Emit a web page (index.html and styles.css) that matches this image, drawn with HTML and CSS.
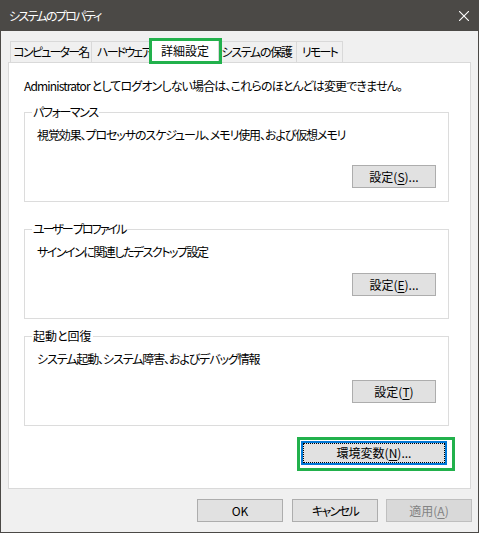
FILE: index.html
```html
<!DOCTYPE html>
<html lang="ja">
<head>
    <meta charset="UTF-8">
    <title>システムのプロパティ</title>
    <link rel="stylesheet" href="styles.css">
</head>
<body>
    <div class="window">
        <div class="titlebar">
            <span class="title">システムのプロパティ</span>
            <svg class="close" width="10" height="10" viewBox="0 0 10 10">
                <path d="M0 0L10 10M10 0L0 10" stroke="#fff" stroke-width="1.1" fill="none"/>
            </svg>
        </div>

        <div class="content">
            <div class="tabs">
                <div class="tab tab-name">コンピューター名</div>
                <div class="tab tab-hw">ハードウェア</div>
                <div class="tab active">詳細設定</div>
                <div class="tab tab-prot">システムの保護</div>
                <div class="tab tab-remote">リモート</div>
            </div>

            <div class="panel">
                <p class="intro">Administrator としてログオンしない場合は、これらのほとんどは変更できません。</p>

                <fieldset class="group group-perf">
                    <legend>パフォーマンス</legend>
                    <p class="desc">視覚効果、プロセッサのスケジュール、メモリ使用、および仮想メモリ</p>
                    <div class="actions"><button class="btn">設定(<u>S</u>)...</button></div>
                </fieldset>

                <fieldset class="group group-profile">
                    <legend>ユーザー&nbsp;&nbsp;プロファイル</legend>
                    <p class="desc">サインインに関連したデスクトップ設定</p>
                    <div class="actions"><button class="btn">設定(<u>E</u>)...</button></div>
                </fieldset>

                <fieldset class="group group-startup">
                    <legend>起動と回復</legend>
                    <p class="desc">システム起動、システム障害、およびデバッグ情報</p>
                    <div class="actions"><button class="btn">設定(<u>T</u>)</button></div>
                </fieldset>

                <div class="actions env-row">
                    <button class="btn env">環境変数(<u>N</u>)...</button>
                </div>
            </div>

            <div class="footer">
                <button class="btn wide">OK</button>
                <button class="btn wide kana">キャンセル</button>
                <button class="btn wide" disabled>適用(<u>A</u>)</button>
            </div>
        </div>
    </div>
</body>
</html>
```

FILE: styles.css
```css
* {
    box-sizing: border-box;
}
body {
    margin: 0;
    background: #fff;
    font-family: "Noto Sans CJK JP", sans-serif;
    font-size: 12px;
    line-height: 16px;
    color: #000;
    font-feature-settings: "palt";
}
p {
    margin: 0;
}
.window {
    width: 479px;
    height: 533px;
    display: flex;
    flex-direction: column;
    background: #f0f0f0;
    border: 1px solid #4b4946;
    border-top: none;
}
.titlebar {
    height: 31px;
    flex: none;
    display: flex;
    align-items: center;
    justify-content: space-between;
    padding: 0 9px 0 8px;
    background: #4b4946;
    color: #fff;
}
.title {
    letter-spacing: -1.7px;
}
.close {
    display: block;
}
.content {
    flex: 1;
    display: flex;
    flex-direction: column;
    padding: 10px 7px 0 7px;
}

/* tabs */
.tabs {
    height: 21px;
    flex: none;
    display: flex;
    align-items: flex-end;
    margin-left: 2px;
    position: relative;
    z-index: 1;
}
.tab {
    height: 21px;
    padding: 0;
    display: flex;
    align-items: center;
    justify-content: center;
    white-space: nowrap;
    letter-spacing: -1.8px;
    background: #f0f0f0;
    border: 1px solid #d9d9d9;
    border-bottom: none;
    border-left: none;
}
.tab:first-child {
    border-left: 1px solid #d9d9d9;
}
.tab-name { width: 82px; }
.tab-hw { width: 61px; justify-content: flex-start; padding-left: 5px; }
.tab-prot { width: 80px; letter-spacing: -1.3px; }
.tab-remote { width: 46px; }
.tab.active {
    width: 68px;
    height: 25px;
    margin: 0 -2px -1px -2px;
    letter-spacing: 0;
    background: #fff;
    border-left: 1px solid #d9d9d9;
    position: relative;
    z-index: 2;
}
.tab.active::after {
    content: "";
    position: absolute;
    top: -1px;
    left: -3px;
    right: -4px;
    bottom: -1px;
    border: 3px solid #22b14c;
}

/* panel */
.panel {
    flex: 1;
    background: #fff;
    border: 1px solid #d9d9d9;
    padding: 15px 21px 0 15px;
}
.intro {
    margin-bottom: 10px;
    letter-spacing: -0.85px;
}
.group {
    margin: 0;
    min-width: 0;
    padding: 7px 12px 22px 12px;
    border: 1px solid #dcdcdc;
}
.group legend {
    padding: 0 1px;
    margin-left: -5px;
    line-height: 16px;
    letter-spacing: -1.4px;
}
.group-profile legend {
    letter-spacing: -2px;
}
.group-startup legend {
    letter-spacing: 0;
}
.desc {
    letter-spacing: -1.1px;
}
.group-profile .desc {
    letter-spacing: -1.5px;
}
.actions {
    display: flex;
    justify-content: flex-end;
    margin-top: 13px;
}
.group-perf {
    padding-bottom: 13px;
}
.group-perf .actions {
    margin-top: 22px;
}
.group-profile {
    margin-top: 19px;
}
.group-startup {
    margin-top: 9px;
}
.env-row {
    margin-top: 15px;
    margin-right: 2px;
}

/* buttons */
.btn {
    width: 84px;
    height: 23px;
    padding: 0;
    font: inherit;
    line-height: 16px;
    color: #000;
    background: #e1e1e1;
    border: 1px solid #adadad;
    font-feature-settings: "palt";
}
.btn u {
    text-decoration-thickness: 1px;
    text-underline-offset: 2px;
}
.btn.kana {
    letter-spacing: -1.6px;
}
.btn.env {
    width: 146px;
    height: 24px;
    border: 2px solid #0078d7;
    outline: 1px dotted #000;
    outline-offset: -3px;
    position: relative;
}
.btn.env::after {
    content: "";
    position: absolute;
    top: -6px;
    left: -6px;
    right: -10px;
    bottom: -8px;
    border: 3px solid #22b14c;
}
.btn.wide {
    width: 86px;
}
.btn:disabled {
    color: #838383;
    background: #d9d9d9;
    border-color: #bfbfbf;
}
.footer {
    height: 43px;
    flex: none;
    display: flex;
    justify-content: flex-end;
    gap: 8px;
    padding: 10px 0 0 0;
    margin-right: -1px;
}
.footer .btn:first-child {
    margin-right: 1px;
}
```
